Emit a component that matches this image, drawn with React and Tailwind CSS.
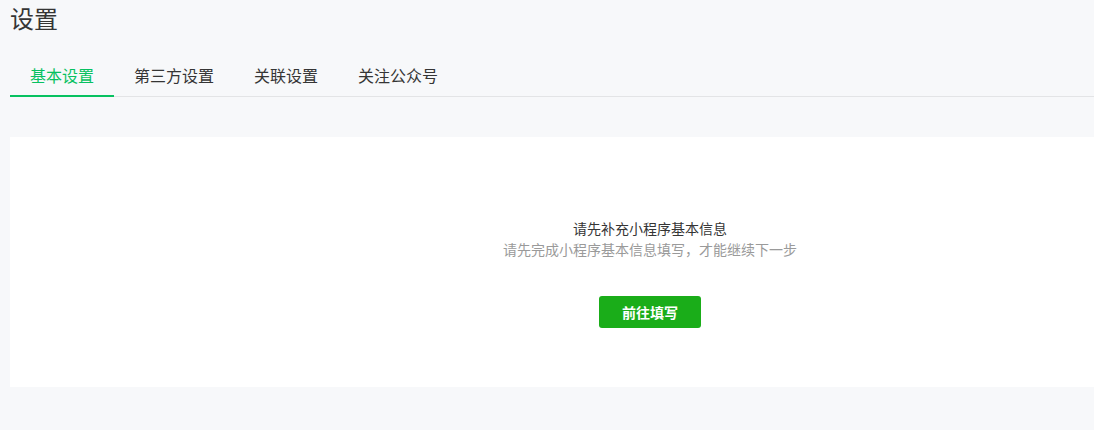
import React from 'react'

const tabs = ['基本设置', '第三方设置', '关联设置', '关注公众号']

function Tabs() {
  return (
    <div className="mt-[17px] flex border-b border-[#e3e4e6]">
      {tabs.map((t, i) => (
        <div
          key={t}
          className={
            i === 0
              ? '-mb-px border-b-2 border-[#07c160] px-5 pt-[10px] pb-2 text-base leading-6 text-[#07c160]'
              : '-mb-px border-b-2 border-transparent px-5 pt-[10px] pb-2 text-base leading-6 text-[#353535]'
          }
        >
          {t}
        </div>
      ))}
    </div>
  )
}

export default function App() {
  return (
    <div className="min-h-screen overflow-hidden bg-[#f7f8fa] font-['Noto_Sans_CJK_SC','Noto_Sans',sans-serif]">
      <div className="pl-[10px]">
        <h2 className="text-2xl leading-9 font-normal text-[#353535]">设置</h2>
        <Tabs />
        <div className="mt-10 flex h-[250px] w-[1280px] shrink-0 flex-col items-center bg-white pt-[81px]">
          <p className="text-sm leading-5 text-[#353535]">请先补充小程序基本信息</p>
          <p className="mt-px text-sm leading-5 text-[#9a9a9a]">请先完成小程序基本信息填写，才能继续下一步</p>
          <button className="mt-[37px] h-8 w-[102px] rounded-[3px] bg-[#1aad19] text-sm font-bold text-white">
            前往填写
          </button>
        </div>
      </div>
    </div>
  )
}
